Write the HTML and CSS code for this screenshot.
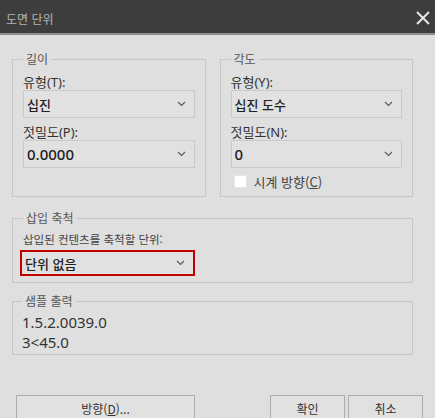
FILE: index.html
```html
<!DOCTYPE html>
<html lang="ko">
<head>
<meta charset="utf-8">
<title>도면 단위</title>
<link rel="stylesheet" href="styles.css">
</head>
<body>
<div class="dialog">
  <div class="titlebar">
    <span class="title">도면 단위</span>
    <svg class="close" width="14" height="14" viewBox="0 0 14 14"><path d="M1 1 L13 13 M13 1 L1 13" stroke="#e6e6e6" stroke-width="2" fill="none"/></svg>
  </div>
  <div class="content">
    <div class="row">
      <fieldset class="group">
        <legend>길이</legend>
        <div class="label">유형(T):</div>
        <div class="select"><span>십진</span><svg class="chev" width="9" height="6" viewBox="0 0 9 6"><polyline points="1,1 4.5,4.5 8,1" fill="none" stroke="#5a5a5a" stroke-width="1.2"/></svg></div>
        <div class="label second">젓밀도(P):</div>
        <div class="select"><span class="num">0.0000</span><svg class="chev" width="9" height="6" viewBox="0 0 9 6"><polyline points="1,1 4.5,4.5 8,1" fill="none" stroke="#5a5a5a" stroke-width="1.2"/></svg></div>
      </fieldset>
      <fieldset class="group">
        <legend>각도</legend>
        <div class="label">유형(Y):</div>
        <div class="select"><span>십진 도수</span><svg class="chev" width="9" height="6" viewBox="0 0 9 6"><polyline points="1,1 4.5,4.5 8,1" fill="none" stroke="#5a5a5a" stroke-width="1.2"/></svg></div>
        <div class="label second">젓밀도(N):</div>
        <div class="select"><span class="num">0</span><svg class="chev" width="9" height="6" viewBox="0 0 9 6"><polyline points="1,1 4.5,4.5 8,1" fill="none" stroke="#5a5a5a" stroke-width="1.2"/></svg></div>
        <div class="check"><span class="box"></span><span class="check-label">시계 방향(<u>C</u>)</span></div>
      </fieldset>
    </div>
    <fieldset class="group wide insert">
      <legend>삽입 축척</legend>
      <div class="sublabel">삽입된 컨텐츠를 축척할 단위:</div>
      <div class="select focused"><span>단위 없음</span><svg class="chev" width="9" height="6" viewBox="0 0 9 6"><polyline points="1,1 4.5,4.5 8,1" fill="none" stroke="#5a5a5a" stroke-width="1.2"/></svg></div>
    </fieldset>
    <fieldset class="group wide sample">
      <legend>샘플 출력</legend>
      <div class="sample-line">1.5.2.0039.0</div>
      <div class="sample-line">3&lt;45.0</div>
    </fieldset>
  </div>
  <div class="buttons">
    <button class="btn dir">방향(<u>D</u>)...</button>
    <div class="btn-pair">
      <button class="btn small">확인</button>
      <button class="btn small">취소</button>
    </div>
  </div>
</div>
</body>
</html>
```
FILE: styles.css
```css
html, body {
  margin: 0;
  padding: 0;
}
body {
  width: 435px;
  height: 418px;
  overflow: hidden;
  background: #dfdfdf;
  font-family: "Noto Sans", "Noto Sans CJK KR", sans-serif;
  color: #2a2a2a;
}
.dialog {
  width: 435px;
  height: 418px;
  background: #dfdfdf;
}
.titlebar {
  height: 33px;
  background: #3d3d3d;
  border-bottom: 2px solid #8e8e8e;
  display: flex;
  align-items: center;
  justify-content: space-between;
  padding: 0 5px 0 6px;
  box-sizing: content-box;
}
.title {
  font-size: 12px;
  color: #b4b4b4;
  font-family: "Noto Sans CJK KR", sans-serif;
  padding-top: 3px;
}
.close {
  margin-top: 2px;
}
.content {
  padding: 17px 22px 0 12px;
}
.row {
  display: flex;
  gap: 14px;
  align-items: stretch;
}
.group {
  flex: 1;
  margin: 0;
  min-width: 0;
  border: 1px solid #c6c6c6;
  padding: 8px 10px 8px 10px;
}
.group legend {
  font-family: "Noto Sans CJK KR", sans-serif;
  font-size: 12px;
  line-height: 14px;
  color: #555;
  padding: 0 3px;
}
.label {
  font-size: 13px;
  line-height: 16px;
  color: #333;
}
.label.second {
  margin-top: 6px;
}
.select {
  height: 26px;
  border: 1px solid #c9c9c9;
  background: #e1e1e1;
  display: flex;
  align-items: center;
  justify-content: space-between;
  padding: 0 8px 0 3px;
  font-family: "Noto Sans CJK KR", sans-serif;
  font-size: 13px;
  font-weight: 500;
  color: #222;
}
.select .num {
  font-family: "Noto Sans", sans-serif;
  font-size: 15px;
  font-weight: 500;
}
.chev {
  flex: none;
}
.check {
  display: flex;
  align-items: center;
  margin-top: 6px;
  height: 14px;
  padding-left: 3px;
}
.box {
  width: 11px;
  height: 11px;
  background: #fff;
  border: 1px solid #e6e6e6;
  margin-right: 7px;
}
.check-label {
  font-family: "Noto Sans CJK KR", sans-serif;
  font-size: 13px;
  color: #444;
}
.wide {
  display: block;
}
.insert {
  margin-top: 14px;
  padding: 7px 10px 6px 10px;
}
.sublabel {
  font-family: "Noto Sans CJK KR", sans-serif;
  font-size: 11.5px;
  line-height: 15px;
  color: #444;
}
.select.focused {
  margin-top: 3px;
  margin-left: -3px;
  width: 160px;
  height: 22px;
  border: 2px solid #c00000;
}
.sample {
  margin-top: 11px;
  padding: 4px 10px 2px 9px;
}
.sample-line {
  font-family: "Noto Sans", sans-serif;
  font-size: 15px;
  line-height: 20px;
  color: #333;
}
.buttons {
  display: flex;
  justify-content: space-between;
  padding: 40px 12px 0 16px;
}
.btn-pair {
  display: flex;
  gap: 3px;
}
.btn {
  height: 27px;
  border: 1px solid #adadad;
  background: #e1e1e1;
  font-family: "Noto Sans CJK KR", sans-serif;
  font-size: 12px;
  color: #333;
  padding: 0;
}
.btn.dir {
  width: 179px;
}
.btn.small {
  width: 75px;
}
```
